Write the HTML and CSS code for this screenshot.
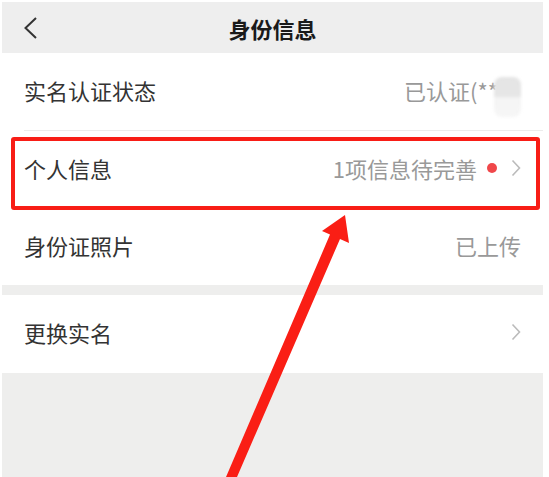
FILE: index.html
```html
<!DOCTYPE html>
<html lang="zh-CN">
<head>
<meta charset="utf-8">
<title>身份信息</title>
<link rel="stylesheet" href="styles.css">
</head>
<body>
<div class="page">
  <header class="navbar">
    <div class="nav-left">
      <svg class="back" width="14" height="24" viewBox="0 0 14 24"><polyline points="12,2 1.5,12 12,22" fill="none" stroke="#333" stroke-width="2" stroke-linejoin="miter"/></svg>
    </div>
    <h1 class="title">身份信息</h1>
    <div class="nav-right"></div>
  </header>

  <section class="group">
    <div class="row">
      <span class="label">实名认证状态</span>
      <span class="value">已认证(**<span class="mask"></span></span>
    </div>
    <div class="divider"></div>
    <div class="row">
      <span class="label">个人信息</span>
      <span class="value">1项信息待完善<span class="dot"></span><svg class="chev" width="10" height="18" viewBox="0 0 10 18"><polyline points="1.5,1.5 8.5,9 1.5,16.5" fill="none" stroke="#bbb" stroke-width="1.6"/></svg></span>
    </div>
    <div class="row">
      <span class="label">身份证照片</span>
      <span class="value">已上传</span>
    </div>
  </section>

  <section class="group second">
    <div class="row tall">
      <span class="label">更换实名</span>
      <span class="value"><svg class="chev" width="10" height="18" viewBox="0 0 10 18"><polyline points="1.5,1.5 8.5,9 1.5,16.5" fill="none" stroke="#bbb" stroke-width="1.6"/></svg></span>
    </div>
  </section>
</div>

<div class="highlight"></div>
<svg class="arrow" width="549" height="477" viewBox="0 0 549 477">
  <polygon points="345,215 349,243 340,239 237,477 226,477 330,234.6 322,231" fill="#fa1e15"/>
</svg>
</body>
</html>
```

FILE: styles.css
```css
html, body {
  margin: 0;
  padding: 0;
  background: #ffffff;
}
body {
  padding: 2px 6px 0 2px;
  font-family: "Noto Sans CJK SC", "Noto Sans", sans-serif;
  overflow: hidden;
}
.page {
  background: #eeeeed;
  height: 475px;
  overflow: hidden;
}
.navbar {
  height: 51px;
  background: #eeeeee;
  display: grid;
  grid-template-columns: 1fr auto 1fr;
  align-items: center;
}
.nav-left {
  display: flex;
  align-items: center;
  padding-left: 22px;
}
.back {
  display: block;
}
.title {
  margin: 0;
  font-size: 22px;
  font-weight: 700;
  color: #1a1a1a;
  line-height: 1;
}
.group {
  background: #ffffff;
}
.second {
  margin-top: 10px;
}
.row {
  height: 77px;
  box-sizing: border-box;
  padding: 0 22px 4px;
  display: flex;
  align-items: center;
  justify-content: space-between;
}
.row.tall {
  height: 78px;
}
.divider {
  height: 1px;
  margin-left: 22px;
  background: #ececec;
}
.label {
  font-size: 22px;
  color: #333333;
}
.value {
  font-size: 22px;
  color: #999999;
  display: flex;
  align-items: center;
}
.mask {
  display: inline-block;
  width: 27px;
  height: 40px;
  margin-left: -4px;
  margin-top: 14px;
  border-radius: 8px;
  background: linear-gradient(#e4e4e4 0, #e6e6e6 50%, #f4f4f4 50%, #f6f6f6 100%);
  filter: blur(1.5px);
}
.dot {
  display: inline-block;
  width: 10px;
  height: 10px;
  border-radius: 50%;
  background: #f0474a;
  margin-left: 10px;
  margin-right: 14px;
}
.chev {
  display: block;
}
.highlight {
  position: absolute;
  left: 11px;
  top: 137px;
  width: 521px;
  height: 65px;
  border: 4px solid #f81d16;
  border-radius: 3px;
}
.arrow {
  position: absolute;
  left: 0;
  top: 0;
}
```
